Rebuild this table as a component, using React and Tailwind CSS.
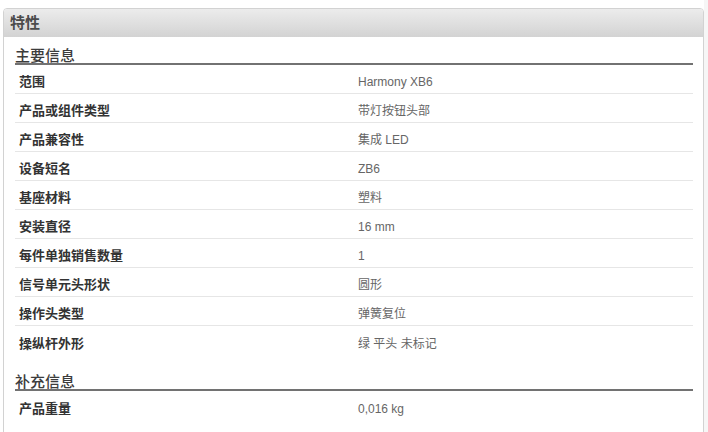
import React from "react";

const mainInfo = [
  ["范围", "Harmony XB6"],
  ["产品或组件类型", "带灯按钮头部"],
  ["产品兼容性", "集成 LED"],
  ["设备短名", "ZB6"],
  ["基座材料", "塑料"],
  ["安装直径", "16 mm"],
  ["每件单独销售数量", "1"],
  ["信号单元头形状", "圆形"],
  ["操作头类型", "弹簧复位"],
  ["操纵杆外形", "绿 平头 未标记"],
];

const extraInfo = [["产品重量", "0,016 kg"]];

const font = "font-['Liberation_Sans','Noto_Sans_CJK_SC',sans-serif]";

const Section = ({ title, rows, className }) => (
  <div className={className}>
    <h3 className="h-[20px] pt-[3px] leading-[16px] text-[15px] font-medium text-[#3c3c3c] border-b-2 border-[#727272]">
      {title}
    </h3>
    <div>
      {rows.map(([label, value]) => (
        <div
          key={label}
          className="flex h-[29px] pt-[6px] items-center border-b border-[#e6e6e6] last:border-b-0"
        >
          <div className="w-1/2 pl-[4px] text-[13px] font-bold text-[#333]">
            {label}
          </div>
          <div className="w-1/2 pl-[4px] text-[12px] text-[#666]">{value}</div>
        </div>
      ))}
    </div>
  </div>
);

const App = () => {
  return (
    <div className={`w-[708px] h-[432px] overflow-hidden bg-white flex ${font}`}>
      <div className="ml-[3px] mt-[8px] w-[701px] h-[440px] border border-[#d2d2d2] rounded-t-[4px] bg-white">
        <div className="h-[28px] pl-[6px] flex items-center rounded-t-[3px] bg-linear-to-b from-[#ececec] to-[#d3d3d3] text-[15px] font-bold text-[#4b4b4b]">
          特性
        </div>
        <div className="pl-[11px] pr-[10px]">
          <Section title="主要信息" rows={mainInfo} className="mt-[8px]" />
          <Section title="补充信息" rows={extraInfo} className="mt-[16px]" />
        </div>
      </div>
      <div className="flex-1 bg-[#f6f6f6]" />
    </div>
  );
};

export default App;
